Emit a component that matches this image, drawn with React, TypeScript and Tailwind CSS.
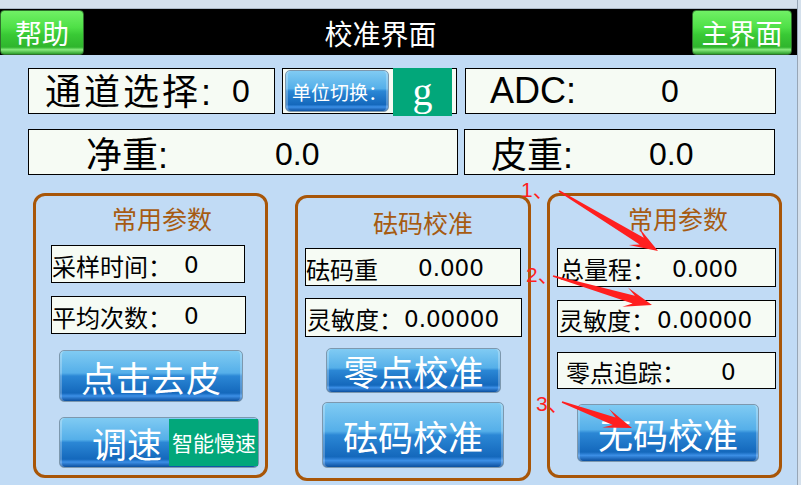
import React from "react";

const CJK = "[font-family:'Noto_Sans_CJK_SC',sans-serif]";
const NUM = "[font-family:'DejaVu_Sans','Noto_Sans_CJK_SC',sans-serif]";
const LAT = "[font-family:'Liberation_Sans','Noto_Sans_CJK_SC',sans-serif]";

const BLUE =
  "flex items-center justify-center rounded-[5px] border border-[#7d98ae] bg-[linear-gradient(180deg,#80cbf3_0%,#55afe9_44%,#2b87d5_50%,#1468bc_84%,#3c8fe6_90%,#0b4f9e_100%)] text-white shadow-[inset_2px_0_0_rgba(255,255,255,0.25),inset_-2px_0_0_rgba(255,255,255,0.25)]";

const GREEN =
  "flex items-center justify-center rounded-[4px] border border-[#2f6f2c] bg-[linear-gradient(180deg,#70f065_0%,#4fe047_38%,#39c935_55%,#2fb52d_84%,#88ea7e_90%,#2d9e2b_100%)] text-white";

function Field({ className, children }: { className: string; children: React.ReactNode }) {
  return (
    <div className={`flex shrink-0 items-center border border-black bg-[#f6fbf4] text-black leading-none ${className}`}>
      {children}
    </div>
  );
}

// Tapered annotation arrow: thin tail, widening shaft, swept-back head.
function arrowPoints(x1: number, y1: number, x2: number, y2: number) {
  const dx = x2 - x1;
  const dy = y2 - y1;
  const len = Math.hypot(dx, dy);
  const ux = dx / len;
  const uy = dy / len;
  const nx = -uy;
  const ny = ux;
  const head = 25;
  const half = 10;
  const p = (a: number, b: number) => `${(x1 + ux * a + nx * b).toFixed(1)},${(y1 + uy * a + ny * b).toFixed(1)}`;
  return [
    p(0, 0.8),
    p(len - head + 6, 4),
    p(len - head - 3, half),
    p(len, 0),
    p(len - head - 3, -half),
    p(len - head + 6, -4),
    p(0, -0.8),
  ].join(" ");
}

export default function App() {
  return (
    <div className="relative flex h-[485px] w-[801px] overflow-hidden bg-[#c1dbf5]">
      <div className="flex w-[797px] shrink-0 flex-col">
        {/* window strip */}
        <div className="h-[9px] shrink-0 border-b border-[#aab7c5] bg-[#d4e0ec]" />

        {/* header bar */}
        <div className="flex h-[46px] shrink-0 items-start bg-black pt-[1px]">
          <div className={`${GREEN} ${CJK} h-[45px] w-[84px] text-[27px] leading-none`}>帮助</div>
          <div className={`${CJK} flex h-[45px] flex-1 items-center justify-center pr-[15px] text-[28px] leading-none text-white`}>
            校准界面
          </div>
          <div className={`${GREEN} ${CJK} mr-[5px] h-[45px] w-[100px] text-[27px] leading-none`}>主界面</div>
        </div>

        <div className="flex flex-col pl-[28px] pt-[13px]">
          {/* row 1 */}
          <div className="flex h-[46px]">
            <Field className="h-[46px] w-[247px] pl-[16px]">
              <span className={`${CJK} w-[187px] shrink-0 text-[36px] tracking-[3px]`}>
                通道选择<span className={`${LAT} tracking-normal`}>:</span>
              </span>
              <span className={`${LAT} text-[32px]`}>0</span>
            </Field>

            <div className="ml-[7px] flex h-[46px] w-[175px] shrink-0 items-stretch border border-black bg-[#f6fbf4]">
              <div className={`${BLUE} ${CJK} ml-[2px] mt-[1px] h-[42px] w-[104px] justify-start whitespace-nowrap rounded-[4px] pl-[6px] text-[19px] leading-none bg-[linear-gradient(180deg,#74c0e6_0%,#4ca3d7_42%,#2479b5_52%,#165f98_84%,#4fb3ea_90%,#0e4c7e_100%)]`}>
                单位切换：
              </div>
              <div className="-my-[1px] ml-[4px] flex h-[48px] w-[59px] flex-col items-center bg-[#02a77a] pt-[4px]">
                <span className="[font-family:'Liberation_Serif',serif] text-[40px] leading-none text-white">g</span>
              </div>
            </div>

            <Field className="ml-[8px] h-[46px] w-[311px] pl-[24px]">
              <span className={`${LAT} w-[171px] shrink-0 text-[36px]`}>ADC:</span>
              <span className={`${LAT} text-[32px]`}>0</span>
            </Field>
          </div>

          {/* row 2 */}
          <div className="mt-[15px] flex h-[46px]">
            <Field className="h-[46px] w-[430px] pl-[57px] pt-[4px]">
              <span className={`${CJK} w-[189px] shrink-0 text-[36px]`}>
                净重<span className={LAT}>:</span>
              </span>
              <span className={`${LAT} text-[32px]`}>0.0</span>
            </Field>
            <Field className="ml-[6px] h-[46px] w-[311px] pl-[26px] pt-[4px]">
              <span className={`${CJK} w-[158px] shrink-0 text-[36px]`}>
                皮重<span className={LAT}>:</span>
              </span>
              <span className={`${LAT} text-[32px]`}>0.0</span>
            </Field>
          </div>

          {/* parameter panels */}
          <div className="mt-[18px] flex items-start">
            {/* common parameters */}
            <div className="ml-[5px] flex h-[285px] w-[235px] shrink-0 flex-col items-start rounded-[12px] border-[3px] border-[#a85608]">
              <div className={`${CJK} ml-[76px] mt-[10px] text-[25px] leading-none text-[#a65b12]`}>常用参数</div>
              <Field className="ml-[15px] mt-[14px] h-[38px] w-[194px] pt-[3px]">
                <span className={`${CJK} w-[132px] shrink-0 text-[24px]`}>采样时间：</span>
                <span className={`${NUM} text-[23px]`}>0</span>
              </Field>
              <Field className="ml-[15px] mt-[13px] h-[38px] w-[195px] pt-[3px]">
                <span className={`${CJK} w-[132px] shrink-0 text-[24px]`}>平均次数：</span>
                <span className={`${NUM} text-[23px]`}>0</span>
              </Field>
              <div className={`${BLUE} ${CJK} ml-[23px] mt-[16px] h-[52px] w-[184px] text-[35px] leading-none`}>点击去皮</div>
              <div className={`${BLUE} ${CJK} ml-[23px] mt-[15px] h-[51px] w-[200px] justify-start text-[35px] leading-none`}>
                <span className="ml-[32px] w-[77px] shrink-0">调速</span>
                <span className="flex h-[47px] w-[89px] shrink-0 items-center overflow-hidden whitespace-nowrap bg-[#02a77a] pl-[3px] text-[21px]">
                  智能慢速
                </span>
              </div>
            </div>

            {/* weight calibration */}
            <div className="ml-[27px] mt-[2px] flex h-[286px] w-[236px] shrink-0 flex-col items-start rounded-[12px] border-[3px] border-[#a85608]">
              <div className={`${CJK} ml-[75px] mt-[12px] text-[25px] leading-none text-[#a65b12]`}>砝码校准</div>
              <Field className="ml-[7px] mt-[13px] h-[38px] w-[216px] pt-[3px]">
                <span className={`${CJK} w-[112px] shrink-0 text-[24px]`}>砝码重</span>
                <span className={`${NUM} text-[23px]`}>0.000</span>
              </Field>
              <Field className="ml-[7px] mt-[12px] h-[39px] w-[217px] pl-[1px] pt-[3px]">
                <span className={`${CJK} w-[97px] shrink-0 text-[24px]`}>灵敏度：</span>
                <span className={`${NUM} text-[23px]`}>0.00000</span>
              </Field>
              <div className={`${BLUE} ${CJK} ml-[28px] mt-[11px] h-[45px] w-[175px] text-[35px] leading-none`}>零点校准</div>
              <div className={`${BLUE} ${CJK} ml-[24px] mt-[9px] h-[66px] w-[182px] text-[35px] leading-none`}>砝码校准</div>
            </div>

            {/* weightless calibration */}
            <div className="ml-[16px] flex h-[285px] w-[235px] shrink-0 flex-col items-start rounded-[12px] border-[3px] border-[#a85608]">
              <div className={`${CJK} ml-[78px] mt-[10px] text-[25px] leading-none text-[#a65b12]`}>常用参数</div>
              <Field className="ml-[7px] mt-[17px] h-[39px] w-[219px] pl-[2px] pt-[3px]">
                <span className={`${CJK} w-[112px] shrink-0 text-[24px]`}>总量程：</span>
                <span className={`${NUM} text-[23px]`}>0.000</span>
              </Field>
              <Field className="ml-[7px] mt-[13px] h-[37px] w-[219px] pl-[1px] pt-[3px]">
                <span className={`${CJK} w-[98px] shrink-0 text-[24px]`}>灵敏度：</span>
                <span className={`${NUM} text-[23px]`}>0.00000</span>
              </Field>
              <Field className="ml-[7px] mt-[15px] h-[37px] w-[219px] pl-[8px] pt-[3px]">
                <span className={`${CJK} w-[155px] shrink-0 text-[24px]`}>零点追踪：</span>
                <span className={`${NUM} text-[23px]`}>0</span>
              </Field>
              <div className={`${BLUE} ${CJK} ml-[27px] mt-[15px] h-[58px] w-[182px] text-[35px] leading-none`}>无码校准</div>
            </div>
          </div>
        </div>
      </div>

      {/* window edge */}
      <div className="w-[4px] shrink-0 border-l border-[#97a6b6] bg-[#d4e0ec]" />

      {/* red annotation marks */}
      <svg className="pointer-events-none absolute left-0 top-0" width="801" height="485" viewBox="0 0 801 485">
        <g fill="#ff1f1f">
          <polygon points={arrowPoints(559, 191, 658, 251)} />
          <polygon points={arrowPoints(553, 276, 652, 305)} />
          <polygon points={arrowPoints(562, 402, 632, 428)} />
        </g>
        <g fill="#ff1f1f" fontSize="21" fontFamily="'Liberation Sans','Noto Sans CJK SC',sans-serif">
          <text x="521" y="197">1、</text>
          <text x="526" y="282">2、</text>
          <text x="536" y="411">3、</text>
        </g>
      </svg>
    </div>
  );
}
